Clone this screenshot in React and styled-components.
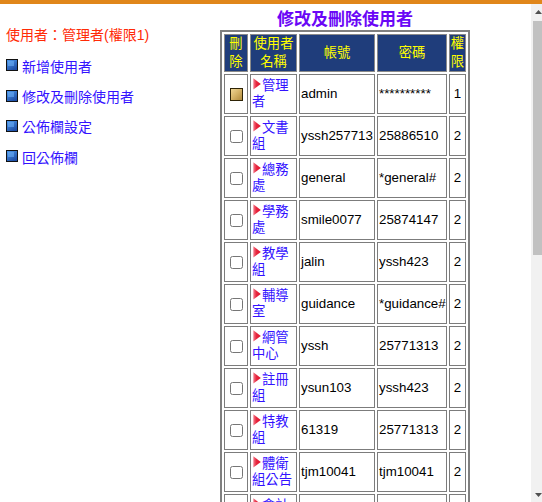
import React from "react";
import styled, { createGlobalStyle } from "styled-components";

const GlobalStyle = createGlobalStyle`
  html, body {
    margin: 0;
    padding: 0;
    background: #ffffff;
  }
  body {
    overflow: hidden;
    font-family: "Liberation Sans", "Noto Sans CJK TC", sans-serif;
  }
`;

const Frame = styled.div`
  width: 542px;
  height: 502px;
  display: flex;
  flex-direction: column;
  overflow: hidden;
`;

const TopBar = styled.div`
  height: 4px;
  flex: none;
  background: #e0861a;
`;

const Viewport = styled.div`
  flex: 1;
  min-height: 0;
  display: flex;
`;

const Page = styled.div`
  flex: 1;
  min-width: 0;
  overflow: hidden;
  display: flex;
  align-items: flex-start;
`;

const Sidebar = styled.nav`
  width: 214px;
  flex: none;
  padding: 21px 0 0 6px;
  display: flex;
  flex-direction: column;
`;

const UserLine = styled.div`
  color: #ff2a06;
  font-size: 14px;
  line-height: 20px;
  white-space: nowrap;
`;

const Menu = styled.div`
  display: flex;
  flex-direction: column;
  gap: 10.33px;
  margin-top: 11.7px;
`;

const MenuLink = styled.a`
  display: flex;
  align-items: center;
  gap: 4px;
  color: #3312ff;
  text-decoration: none;
  font-size: 14px;
  line-height: 20px;
  white-space: nowrap;
  cursor: pointer;
`;

const BulletSvg = styled.svg`
  flex: none;
  margin-bottom: 3px;
`;

const Main = styled.main`
  width: 250px;
  flex: none;
  display: flex;
  flex-direction: column;
`;

const Title = styled.h1`
  margin: 6px 0 0;
  text-align: center;
  font-size: 17px;
  line-height: 20px;
  font-weight: bold;
  color: #6a06f6;
  white-space: nowrap;
`;

const Grid = styled.table`
  width: 250px;
  table-layout: fixed;
  border: 2px solid #808080;
  border-spacing: 2px;
  border-collapse: separate;
`;

const HeadRow = styled.tr`
  height: 38px;
`;

const BodyRow = styled.tr`
  height: 40px;
`;

const HeadCell = styled.th`
  box-sizing: border-box;
  width: ${(p) => p.$w}px;
  padding: 0;
  border: 1px solid #8a8a8a;
  background: #1f3d7b;
  color: #ffff00;
  font-weight: normal;
  font-size: 13.33px;
  line-height: 18px;
  text-align: center;
  vertical-align: middle;
`;

const Cell = styled.td`
  box-sizing: border-box;
  padding: 0 1px;
  border: 1px solid #7c7c7c;
  font-size: 13.33px;
  line-height: 16px;
  color: #000000;
  text-align: ${(p) => p.$align || "left"};
  vertical-align: middle;
  white-space: ${(p) => (p.$wrap ? "normal" : "nowrap")};
`;

const NameLink = styled.a`
  color: #3312ff;
  text-decoration: none;
  cursor: pointer;
`;

const ArrowSvg = styled.svg`
  vertical-align: top;
  margin: 0 1px 0 1px;
`;

const Check = styled.input`
  margin: 3px 3px 3px 4px;
  width: 13px;
  height: 13px;
  vertical-align: middle;
`;

const LockedBox = styled.span`
  display: inline-block;
  box-sizing: border-box;
  width: 13px;
  height: 13px;
  margin: 3px 3px 3px 4px;
  vertical-align: middle;
  border: 1px solid #2e2306;
  background: linear-gradient(135deg, #efd695 0%, #d4b266 50%, #b08a3c 100%);
`;

/* drawn stand-in for the frame's vertical scrollbar */
const ScrollTrack = styled.div`
  width: 11px;
  flex: none;
  overflow: hidden;
  background: #f1f1f1;
`;

const ScrollInner = styled.div`
  width: 15px;
  height: 100%;
  display: flex;
  flex-direction: column;
`;

const ScrollButton = styled.div`
  height: 15px;
  flex: none;
  display: flex;
  align-items: center;
  justify-content: center;
`;

const ScrollSpace = styled.div`
  flex: 1;
  min-height: 0;
  padding: 2px 2px;
`;

const Thumb = styled.div`
  height: 234px;
  background: #c1c1c1;
`;

const Bullet = () => (
  <BulletSvg width="12" height="12" viewBox="0 0 12 12">
    <defs>
      <linearGradient id="bulletFill" x1="0" y1="0" x2="0.6" y2="1">
        <stop offset="0" stopColor="#4f9bef" />
        <stop offset="1" stopColor="#1d4ea6" />
      </linearGradient>
    </defs>
    <rect x="0.5" y="0.5" width="11" height="11" fill="url(#bulletFill)" stroke="#111" />
    <rect x="2" y="2" width="6" height="5" fill="#6fb3f7" opacity="0.55" />
  </BulletSvg>
);

const Arrow = () => (
  <ArrowSvg width="8" height="12" viewBox="0 0 8 12">
    <defs>
      <linearGradient id="arrowFill" x1="0" y1="0" x2="1" y2="0">
        <stop offset="0" stopColor="#f27d8e" />
        <stop offset="0.4" stopColor="#e8283f" />
        <stop offset="1" stopColor="#e0102c" />
      </linearGradient>
    </defs>
    <polygon points="0.3,0.3 7.8,6 0.3,11.5" fill="url(#arrowFill)" />
  </ArrowSvg>
);

const Triangle = ({ up }) => (
  <svg width="7" height="4" viewBox="0 0 7 4">
    <polygon points={up ? "0,4 3.5,0 7,4" : "0,0 7,0 3.5,4"} fill="#505050" />
  </svg>
);

const menu = ["新增使用者", "修改及刪除使用者", "公佈欄設定", "回公佈欄"];

const users = [
  { name: "管理者", account: "admin", password: "**********", level: 1, locked: true },
  { name: "文書組", account: "yssh257713", password: "25886510", level: 2 },
  { name: "總務處", account: "general", password: "*general#", level: 2 },
  { name: "學務處", account: "smile0077", password: "25874147", level: 2 },
  { name: "教學組", account: "jalin", password: "yssh423", level: 2 },
  { name: "輔導室", account: "guidance", password: "*guidance#", level: 2 },
  { name: "網管中心", account: "yssh", password: "25771313", level: 2 },
  { name: "註冊組", account: "ysun103", password: "yssh423", level: 2 },
  { name: "特教組", account: "61319", password: "25771313", level: 2 },
  { name: "體衛組公告", account: "tjm10041", password: "tjm10041", level: 2 },
  { name: "會計室", account: "account", password: "25771313", level: 2 },
  { name: "人事室", account: "personnel", password: "25771313", level: 2 },
];

export default function App() {
  return (
    <>
      <GlobalStyle />
      <Frame>
        <TopBar />
        <Viewport>
          <Page>
            <Sidebar>
              <UserLine>使用者：管理者(權限1)</UserLine>
              <Menu>
                {menu.map((label) => (
                  <MenuLink key={label}>
                    <Bullet />
                    {label}
                  </MenuLink>
                ))}
              </Menu>
            </Sidebar>
            <Main>
              <Title>修改及刪除使用者</Title>
              <Grid>
                <thead>
                  <HeadRow>
                    <HeadCell $w={24}>刪<br />除</HeadCell>
                    <HeadCell $w={47}>使用者<br />名稱</HeadCell>
                    <HeadCell $w={76}>帳號</HeadCell>
                    <HeadCell $w={70}>密碼</HeadCell>
                    <HeadCell $w={17}>權<br />限</HeadCell>
                  </HeadRow>
                </thead>
                <tbody>
                  {users.map((u) => (
                    <BodyRow key={u.account}>
                      <Cell $align="center">
                        {u.locked ? <LockedBox /> : <Check type="checkbox" />}
                      </Cell>
                      <Cell $wrap>
                        <Arrow />
                        <NameLink>{u.name}</NameLink>
                      </Cell>
                      <Cell>{u.account}</Cell>
                      <Cell>{u.password}</Cell>
                      <Cell $align="center">{u.level}</Cell>
                    </BodyRow>
                  ))}
                </tbody>
              </Grid>
            </Main>
          </Page>
          <ScrollTrack>
            <ScrollInner>
              <ScrollButton>
                <Triangle up />
              </ScrollButton>
              <ScrollSpace>
                <Thumb />
              </ScrollSpace>
              <ScrollButton>
                <Triangle />
              </ScrollButton>
            </ScrollInner>
          </ScrollTrack>
        </Viewport>
      </Frame>
    </>
  );
}
